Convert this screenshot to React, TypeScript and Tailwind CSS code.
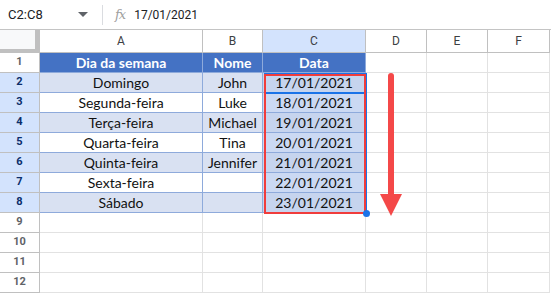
import React from 'react'

// Google Sheets – fill series down the Data column
const COLS = ['A', 'B', 'C', 'D', 'E', 'F']

const rows: string[][] = [
  ['Dia da semana', 'Nome', 'Data'],
  ['Domingo', 'John', '17/01/2021'],
  ['Segunda-feira', 'Luke', '18/01/2021'],
  ['Terça-feira', 'Michael', '19/01/2021'],
  ['Quarta-feira', 'Tina', '20/01/2021'],
  ['Quinta-feira', 'Jennifer', '21/01/2021'],
  ['Sexta-feira', '', '22/01/2021'],
  ['Sábado', '', '23/01/2021'],
  ['', '', ''],
  ['', '', ''],
  ['', '', ''],
  ['', '', ''],
]

function cellClass(r: number, c: number) {
  // r: 0-based row index (row 1 = 0), c: 0-based col (A = 0)
  const inTable = r <= 7 && c <= 2
  if (!inTable) return 'bg-white border-r border-b border-[#e2e2e2]'
  if (r === 0) return 'bg-[#4472c4] text-white font-bold border-r border-b border-[#8eaadb]'
  const light = r % 2 === 1
  if (c === 2) return `${light ? 'bg-[#c6d4ee]' : 'bg-[#cbd9f3]'} border-r border-b border-[#8eaadb]`
  return `${light ? 'bg-[#d9e1f2]' : 'bg-white'} border-r border-b border-[#8eaadb]`
}

export default function App() {
  return (
    <div className="relative w-[551px] h-[294px] overflow-hidden bg-white font-['Roboto',_'Liberation_Sans',_sans-serif]">
      {/* Formula bar */}
      <div className="flex h-[30px] items-center border-b border-[#c4c4c4] text-[13px] text-[#202124]">
        <div className="w-[70px] pl-[8px]">C2:C8</div>
        <svg width="10" height="6" viewBox="0 0 10 6" className="ml-[8px]">
          <path d="M0 0h10L5 5z" fill="#5f6368" />
        </svg>
        <div className="ml-[14px] h-[20px] w-px bg-[#dadce0]" />
        <span className="ml-[12px] font-['DejaVu_Serif',_serif] italic text-[13px] text-[#a0a0a0] tracking-[-1px]">fx</span>
        <span className="ml-[9px] text-[12px]">17/01/2021</span>
      </div>

      {/* Grid */}
      <div className="grid grid-cols-[40px_163px_60px_103px_61px_61px_62px] grid-rows-[23px_repeat(12,20px)]">
        {/* corner */}
        <div className="bg-[#c0c0c0]">
          <div className="h-[19px] w-[35px] bg-[#f8f9fa]" />
        </div>
        {COLS.map((l) => (
          <div
            key={l}
            className={`flex items-center justify-center border-r border-b border-[#c0c0c0] text-[12px] text-[#3c4043] ${l === 'C' ? 'bg-[#d3e3fd]' : 'bg-white'}`}
          >
            {l}
          </div>
        ))}

        {rows.map((row, r) => (
          <React.Fragment key={r}>
            <div
              className={`flex items-center justify-center border-r border-b border-[#c0c0c0] text-[11px] font-bold ${r >= 1 && r <= 7 ? 'bg-[#d3e3fd] text-[#0b2e6b]' : 'bg-white text-[#5f6368]'}`}
            >
              {r + 1}
            </div>
            {COLS.map((_, c) => (
              <div
                key={c}
                className={`flex items-center justify-center text-[14px] font-['Lato',_'Open_Sans',_sans-serif] text-[#111] ${cellClass(r, c)}`}
              >
                {c <= 2 ? row[c] : ''}
              </div>
            ))}
          </React.Fragment>
        ))}
      </div>

      {/* Selection overlay on C2:C8 */}
      <div className="pointer-events-none absolute left-[264px] top-[73px] h-[141px] w-[103px] border-r-2 border-t border-[#1a73e8]" />
      <div className="pointer-events-none absolute left-[265px] top-[92px] h-[2px] w-[100px] bg-[#1a73e8]" />
      <div className="pointer-events-none absolute left-[264px] top-[74px] h-[140px] w-[102px] border-2 border-[#f03c3c]" />
      <div className="pointer-events-none absolute left-[363px] top-[210px] h-[7px] w-[7px] rounded-full bg-[#1a73e8]" />

      {/* Red arrow */}
      <svg className="pointer-events-none absolute left-[378px] top-[72px]" width="26" height="146" viewBox="0 0 26 146">
        <rect x="10" y="1" width="6" height="124" rx="3" fill="#f44848" />
        <path d="M2 122h22L13 144z" fill="#f44848" />
      </svg>
    </div>
  )
}
